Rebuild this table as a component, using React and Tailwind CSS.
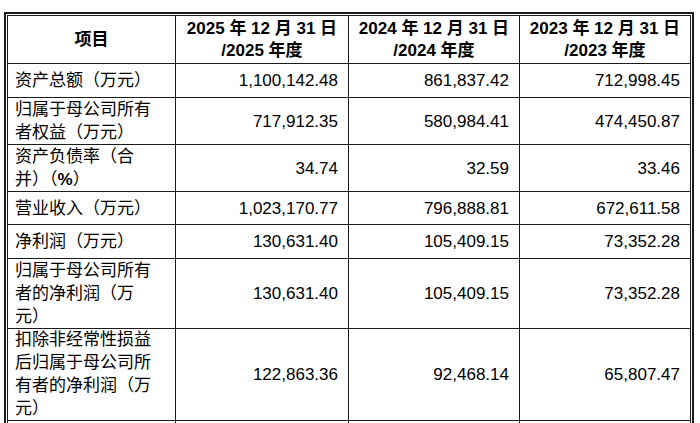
import React from "react";

const rows = [
  { h: "h-[34px]", label: ["资产总额（万元）"], v: ["1,100,142.48", "861,837.42", "712,998.45"] },
  { h: "h-[47px]", label: ["归属于母公司所有", "者权益（万元）"], v: ["717,912.35", "580,984.41", "474,450.87"] },
  {
    h: "h-[47px]",
    label: [
      "资产负债率（合",
      <span key="p">
        并）（<span className="font-bold">%</span>）
      </span>,
    ],
    v: ["34.74", "32.59", "33.46"],
  },
  { h: "h-[33px]", label: ["营业收入（万元）"], v: ["1,023,170.77", "796,888.81", "672,611.58"] },
  { h: "h-[34px]", label: ["净利润（万元）"], v: ["130,631.40", "105,409.15", "73,352.28"] },
  { h: "h-[69px]", label: ["归属于母公司所有", "者的净利润（万", "元）"], v: ["130,631.40", "105,409.15", "73,352.28"] },
  {
    h: "h-[92px]",
    label: ["扣除非经常性损益", "后归属于母公司所", "有者的净利润（万", "元）"],
    v: ["122,863.36", "92,468.14", "65,807.47"],
  },
  { h: "h-[40px]", label: ["基本每股收益（元）"], v: ["", "", ""] },
];

const headers = [
  ["2025 年 12 月 31 日", "/2025 年度"],
  ["2024 年 12 月 31 日", "/2024 年度"],
  ["2023 年 12 月 31 日", "/2023 年度"],
];

const grid = "grid grid-cols-[168px_173px_171px_170px]";
const cell = "border-b border-[#1c1c1c] flex items-center";

export default function App() {
  return (
    <div
      className="w-[700px] h-[423px] overflow-hidden bg-white pt-[12px] pl-[4px] text-black"
      style={{ fontFamily: '"Liberation Sans", "Noto Sans CJK SC", sans-serif' }}
    >
      <div className="w-[690px] border-2 border-[#1c1c1c] p-[1px]">
        <div className="border border-[#1c1c1c] text-[17px] leading-[23px]">
          {/* header */}
          <div className={`${grid} h-[48px] font-bold`}>
            <div className={`${cell} border-r justify-center`}>项目</div>
            {headers.map((hd, i) => (
              <div
                key={i}
                className={`${cell} ${i < 2 ? "border-r" : ""} flex-col justify-center text-center leading-[22px]`}
              >
                <div>{hd[0]}</div>
                <div>{hd[1]}</div>
              </div>
            ))}
          </div>
          {rows.map((r, idx) => (
            <div key={idx} className={`${grid} ${r.h}`}>
              <div className={`${cell} border-r pl-[7px] items-start flex-col justify-center`}>
                {r.label.map((l, j) => (
                  <div key={j} className="whitespace-nowrap">
                    {l}
                  </div>
                ))}
              </div>
              {r.v.map((v, j) => (
                <div key={j} className={`${cell} ${j < 2 ? "border-r" : ""} justify-end pr-[10px]`}>
                  {v}
                </div>
              ))}
            </div>
          ))}
        </div>
      </div>
    </div>
  );
}
